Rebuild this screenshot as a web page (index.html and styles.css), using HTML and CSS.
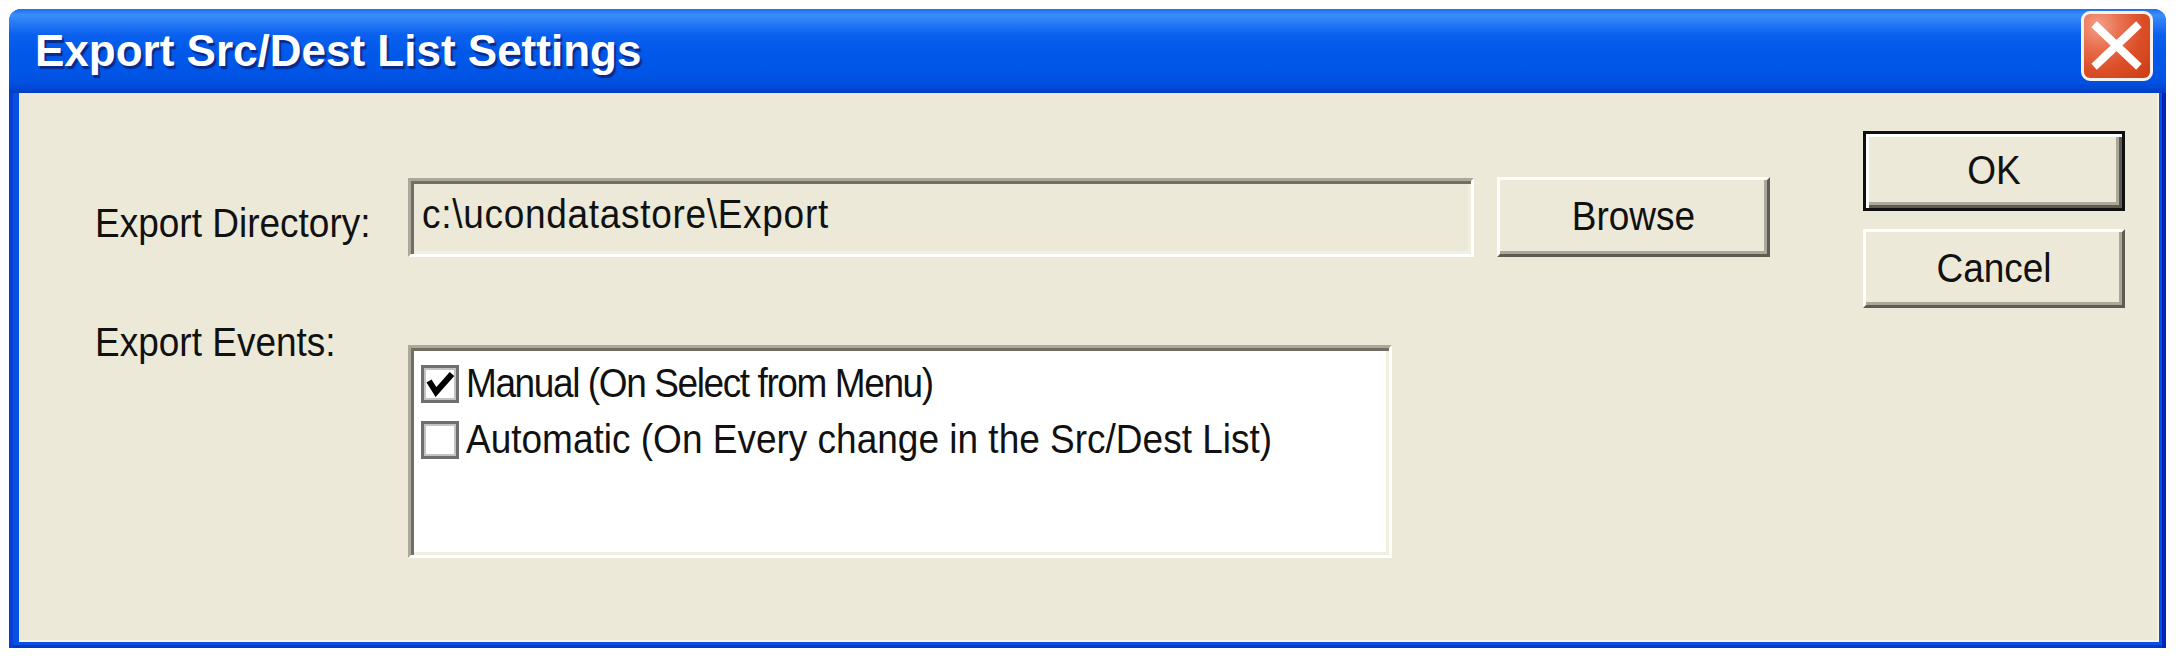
FILE: index.html
```html
<!DOCTYPE html>
<html>
<head>
<meta charset="utf-8">
<title>Export Src/Dest List Settings</title>
<link rel="stylesheet" href="styles.css">
</head>
<body>
<div class="window">
  <div class="titlebar">
    <span class="title">Export Src/Dest List Settings</span>
    <div class="close" aria-label="Close">
      <svg width="66" height="64" viewBox="0 0 66 64"><path d="M13 13 L52 50 M52 13 L13 50" stroke="#fff" stroke-width="8" stroke-linecap="square"/></svg>
    </div>
  </div>
  <div class="frame">
    <div class="content">
      <div class="form">
        <div class="row row-dir">
          <span class="label"><span class="txt">Export Directory:</span></span>
          <div class="input"><span class="txt path">c:\ucondatastore\Export</span></div>
          <div class="btn browse"><span class="txt">Browse</span></div>
        </div>
        <div class="row row-events">
          <span class="label label-top"><span class="txt">Export Events:</span></span>
          <div class="listbox">
            <div class="item">
              <svg class="cb" width="38" height="38" viewBox="0 0 38 38"><rect x="1.5" y="1.5" width="35" height="35" fill="#fff" stroke="#6f6f6f" stroke-width="3"/><rect x="4" y="4" width="30" height="30" fill="none" stroke="#c4c4c4" stroke-width="2"/><polyline points="8,16 15,27 31,9" fill="none" stroke="#000" stroke-width="6"/></svg>
              <span class="txt tight">Manual (On Select from Menu)</span>
            </div>
            <div class="item">
              <svg class="cb" width="38" height="38" viewBox="0 0 38 38"><rect x="1.5" y="1.5" width="35" height="35" fill="#fff" stroke="#6f6f6f" stroke-width="3"/><rect x="4" y="4" width="30" height="30" fill="none" stroke="#c4c4c4" stroke-width="2"/></svg>
              <span class="txt">Automatic (On Every change in the Src/Dest List)</span>
            </div>
          </div>
        </div>
      </div>
      <div class="actions">
        <div class="btn default"><span class="txt">OK</span></div>
        <div class="btn cancel"><span class="txt">Cancel</span></div>
      </div>
    </div>
  </div>
</div>
</body>
</html>
```
FILE: styles.css
```css
html, body {
  margin: 0;
  padding: 0;
  background: #ffffff;
}
body {
  padding: 9px 0 0 9px;
  font-family: "Liberation Sans", Arial, sans-serif;
  font-size: 37px;
  color: #000;
}
.txt {
  display: inline-block;
  transform: scaleY(1.12);
  line-height: 40px;
}
.path {
  letter-spacing: 0.7px;
}
.tight {
  letter-spacing: -1.4px;
}
.window {
  width: 2157px;
  height: 639px;
  display: flex;
  flex-direction: column;
  background: #0054e3;
  border-radius: 12px 12px 0 0;
  overflow: hidden;
}
.titlebar {
  height: 84px;
  flex: none;
  display: flex;
  align-items: flex-start;
  justify-content: space-between;
  padding: 0 13px 0 26px;
  box-sizing: border-box;
  background: linear-gradient(to bottom,
    #1f6ef2 0px, #3b8ef9 6px, #2779f6 14px, #0a60ee 26px,
    #0058e9 45px, #0055e6 65px, #0050df 74px, #0046d2 80px, #003cc4 84px);
}
.title {
  font-family: "Liberation Sans", Arial, sans-serif;
  font-weight: bold;
  font-size: 44px;
  line-height: 84px;
  color: #ffffff;
  text-shadow: 2px 3px 1px #0a2a8a;
  white-space: nowrap;
}
.close {
  margin-top: 2px;
  width: 72px;
  height: 70px;
  box-sizing: border-box;
  border: 3px solid #f4f1ef;
  border-radius: 9px;
  background: radial-gradient(ellipse at 22% 18%, #f2a088 0%, #e97050 30%, #db4f28 60%, #cc3c12 100%);
  display: flex;
  align-items: center;
  justify-content: center;
}
.frame {
  flex: 1;
  padding: 0 7px 6px 10px;
  box-sizing: border-box;
  background: #0650e4;
  box-shadow: inset 4px 0 0 #0a3ed2, inset -4px 0 0 #0024b8, inset 0 -3px 0 #0038c8;
}
.content {
  height: 100%;
  box-sizing: border-box;
  background: #ece9d8;
  display: flex;
  padding-left: 76px;
  box-shadow: inset -2px -2px 0 #f6f3e2;
}
.form {
  margin-top: 84px;
  display: flex;
  flex-direction: column;
}
.row {
  display: flex;
}
.row-dir {
  height: 80px;
  align-items: center;
}
.row-events {
  margin-top: 88px;
  align-items: flex-start;
}
.label {
  width: 313px;
  flex: none;
  line-height: 40px;
  white-space: nowrap;
  color: #111;
}
.row-dir .label {
  align-self: flex-start;
  padding-top: 27px;
}
.label-top {
  margin-top: -22px;
}
.input {
  width: 1066px;
  height: 79px;
  box-sizing: border-box;
  border: 3px solid;
  border-color: #aca899 #ffffff #ffffff #aca899;
  box-shadow: inset 3px 3px 0 #716f64, inset -3px -3px 0 #f1efe2;
  background: #ece9d8;
  padding: 14px 0 0 11px;
  line-height: 40px;
  white-space: nowrap;
  color: #111;
}
.btn {
  box-sizing: border-box;
  display: flex;
  align-items: center;
  justify-content: center;
  background: #ece9d8;
  border: 3px solid;
  border-color: #ffffff #5d5b52 #5d5b52 #ffffff;
  box-shadow: inset -3px -3px 0 #aca899;
  color: #111;
  white-space: nowrap;
}
.browse {
  margin-left: 23px;
  width: 273px;
  height: 80px;
}
.listbox {
  width: 984px;
  height: 213px;
  box-sizing: border-box;
  border: 3px solid;
  border-color: #aca899 #ffffff #ffffff #aca899;
  box-shadow: inset 3px 3px 0 #716f64, inset -3px -3px 0 #f1efe2;
  background: #ffffff;
  padding: 8px 0 0 10px;
  display: flex;
  flex-direction: column;
}
.item {
  height: 56px;
  display: flex;
  align-items: center;
  gap: 7px;
  white-space: nowrap;
  color: #111;
}
.cb {
  flex: none;
  display: block;
}
.actions {
  margin-top: 38px;
  margin-left: 93px;
  display: flex;
  flex-direction: column;
  gap: 18px;
}
.actions .btn {
  width: 262px;
}
.default {
  height: 80px;
  border: 3px solid #111111;
  box-shadow: inset 3px 3px 0 #ffffff, inset -3px -3px 0 #5d5b52, inset -6px -6px 0 #aca899;
}
.cancel {
  height: 79px;
}
```
